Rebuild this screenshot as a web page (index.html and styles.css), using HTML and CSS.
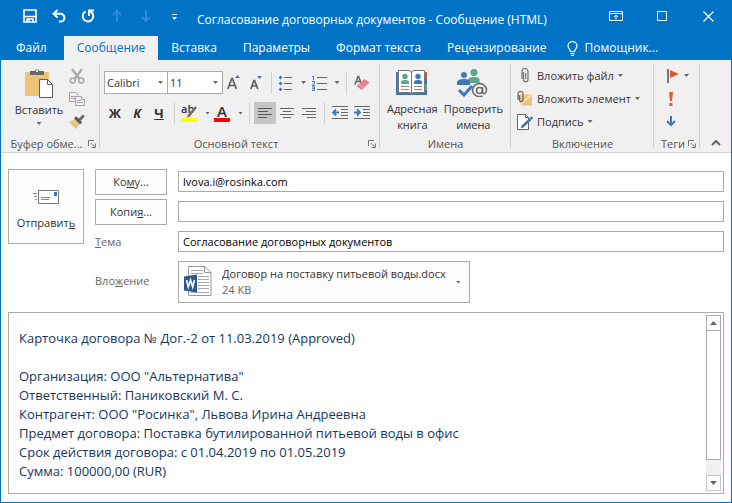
FILE: index.html
```html
<!DOCTYPE html>
<html lang="ru">
<head>
<meta charset="utf-8">
<meta name="viewport" content="width=device-width, initial-scale=1">
<title>Согласование договорных документов - Сообщение (HTML)</title>
<link rel="stylesheet" href="styles.css">
</head>
<body>
<div class="window">
  <header class="titlebar">
    <div class="quick">
      <button class="quick-btn" aria-label="Сохранить"><svg width="14" height="14" viewBox="0 0 14 14" fill="none" stroke="#fff" stroke-width="1.6"><path d="M1 1h12v12H1zM1 7.500h12M4 13V10h6v3M6 10v3"/></svg></button>
      <button class="quick-btn" aria-label="Отменить"><svg width="14" height="14" viewBox="0 0 14 14" fill="none" stroke="#fff" stroke-width="2"><path d="M5.500 1 1.500 4.800l4 3.800M2 4.800h6.500a3.900 3.900 0 0 1 0 7.800H7"/></svg></button>
      <button class="quick-btn" aria-label="Повторить"><svg width="14" height="14" viewBox="0 0 14 14" fill="none" stroke="#fff" stroke-width="2"><path d="M4.500 2.500A5.300 5.300 0 1 0 11 3.700L8 2M13 1.500H8V7"/></svg></button>
      <button class="quick-btn" aria-label="Предыдущий"><svg width="14" height="14" viewBox="0 0 14 14" fill="none" stroke="#2f8bd8" stroke-width="2"><path d="M7 13V2M3 6l4-4 4 4"/></svg></button>
      <button class="quick-btn" aria-label="Следующий"><svg width="14" height="14" viewBox="0 0 14 14" fill="none" stroke="#2f8bd8" stroke-width="2"><path d="M7 1v11M3 8l4 4 4-4"/></svg></button>
      <button class="quick-btn" aria-label="Настройка панели"><svg width="14" height="14" viewBox="0 0 14 14"><path d="M4 5h5v1H4zM4 8h5l-2.500 3z" fill="#fff"/></svg></button>
    </div>
    <h1 class="title">Согласование договорных документов - Сообщение (HTML)</h1>
    <div class="controls">
      <button class="control" aria-label="Параметры ленты"><svg width="14" height="12" viewBox="0 0 14 12" fill="none" stroke="#fff"><path d="M.5 1.500h13v9H.5zM.5 3.500h13M7 9.500V5M5 7l2-2 2 2"/></svg></button>
      <button class="control" aria-label="Развернуть"><svg width="10" height="10" viewBox="0 0 10 10" fill="none" stroke="#fff"><path d="M.5.5h9v9h-9z"/></svg></button>
      <button class="control" aria-label="Закрыть"><svg width="11" height="11" viewBox="0 0 11 11" fill="none" stroke="#fff" stroke-width="1.200"><path d="m.5.5 10 10M10.500.5l-10 10"/></svg></button>
    </div>
  </header>

  <nav class="tabs">
    <a class="tab" href="#file">Файл</a>
    <a class="tab tab-active" href="#message" aria-current="page">Сообщение</a>
    <a class="tab" href="#insert">Вставка</a>
    <a class="tab" href="#options">Параметры</a>
    <a class="tab" href="#format">Формат текста</a>
    <a class="tab" href="#review">Рецензирование</a>
    <a class="tab tab-help" href="#help"><svg width="11" height="15" viewBox="0 0 11 15" fill="none" stroke="#fff" stroke-width="1.200"><path d="M3.500 10.500C3.500 8.500 1 7.500 1 5a4.500 4.300 0 0 1 9 0c0 2.500-2.500 3.500-2.500 5.500zM3.500 12.500h4M4 14.300h3"/></svg>Помощник...</a>
  </nav>

  <section class="ribbon" aria-label="Лента">
    <div class="group">
      <div class="clipboard">
        <button class="paste">
          <svg width="28" height="30" viewBox="0 0 28 30"><path d="M0 4h24v24H0z" fill="#edc37c"/><path d="M5 3h4.500a2.700 2.700 0 0 1 5 0H19v4H5z" fill="#686868"/><path d="M11 2h2v2h-2z" fill="#f0f0f0"/><path d="M14.500 11.500h8l5 5v13h-13z" fill="#fff" stroke="#5f5f5f"/><path d="M22.500 11.500v5h5" fill="none" stroke="#5f5f5f"/></svg>
          <span>Вставить</span>
          <i class="caret"></i>
        </button>
        <div class="stack">
          <button class="tool" aria-label="Вырезать"><svg width="16" height="16" viewBox="0 0 16 16" fill="none" stroke="#a8a8a8"><path d="m3 1 7.500 10M13 1 5.500 11" stroke-width="2.200"/><circle cx="3.800" cy="12.500" r="2.500" stroke-width="1.500"/><circle cx="12.200" cy="12.500" r="2.500" stroke-width="1.500"/></svg></button>
          <button class="tool" aria-label="Копировать"><svg width="16" height="14" viewBox="0 0 16 14" fill="#f3eef3" stroke="#aaa2ab"><path d="M.5.5h6l3 3v6h-9z"/><path d="M2 4.500h4M2 6.500h4"/><path d="M6.500 4.500h6l3 3v6h-9z"/><path d="M12.500 4.500v3h3M8 8.500h4M8 10.500h6"/></svg></button>
          <button class="tool" aria-label="Формат по образцу"><svg width="16" height="15" viewBox="0 0 16 15"><path d="M0 8 5.500 5.500l5 5L7 15z" fill="#edc37c"/><path d="m5 4.500 2.200-2.200 6 6-2.200 2.200z" fill="#5a5a5a"/><path d="m9 5 5-4.500 1.800 1.700-4.500 5z" fill="#686868"/></svg></button>
        </div>
      </div>
      <footer class="caption"><span>Буфер обме...</span><button class="launcher" aria-label="Буфер обмена"><svg width="8" height="8" viewBox="0 0 8 8" fill="none" stroke="#777"><path d="M.5 6V.5H6M3 3l4 4M7.500 3.500v4h-4"/></svg></button></footer>
    </div>

    <div class="group">
      <div class="font-tools">
        <div class="row">
          <label class="pick pick-font"><select aria-label="Шрифт"><option>Calibri</option></select><i class="caret"></i></label>
          <label class="pick pick-size"><select aria-label="Размер шрифта"><option>11</option></select><i class="caret"></i></label>
          <button class="tool" aria-label="Увеличить размер"><svg width="14" height="16" viewBox="0 0 14 16"><path d="m.8 14 4-10.500h.6l4 10.500M2.200 10.500h5.800" fill="none" stroke="#5f5f5f" stroke-width="1.700"/><path d="M8 3h5l-2.500-3z" fill="#3f77b5"/></svg></button>
          <button class="tool" aria-label="Уменьшить размер"><svg width="14" height="16" viewBox="0 0 14 16"><path d="M1.800 14 5 5.500h.6L8.800 14M3 11h4.600" fill="none" stroke="#5f5f5f" stroke-width="1.700"/><path d="M8 1h5l-2.500 3z" fill="#3f77b5"/></svg></button>
          <i class="rule"></i>
          <button class="tool tool-drop" aria-label="Маркеры"><svg width="14" height="16" viewBox="0 0 14 16"><path d="M0 2h3v1H0zM0 8h3v1H0zM0 14h3v1H0zM1 1h1v3H1zM1 7h1v3H1zM1 13h1v3H1z" fill="#3f77b5" stroke="#3f77b5" stroke-width=".5"/><path d="M5 2h8v1H5zM5 8h8v1H5zM5 14h8v1H5z" fill="#666"/></svg><i class="caret"></i></button>
          <button class="tool tool-drop" aria-label="Нумерация"><svg width="15" height="16" viewBox="0 0 15 16"><path d="M0 1.500h1.500V5M0 6.500h2.500V8L.5 10.500h2.500M0 12h2.500v3.500H0M0 13.700h2.500" fill="none" stroke="#3f77b5"/><path d="M5 2h10v1H5zM5 8h10v1H5zM5 14h10v1H5z" fill="#666"/></svg><i class="caret"></i></button>
          <i class="rule"></i>
          <button class="tool" aria-label="Удалить форматирование"><svg width="16" height="16" viewBox="0 0 16 16"><path d="M1 9.500 4 1.500h.6l3 8M2 6.500h4.500" fill="none" stroke="#666" stroke-width="1.600"/><path d="m2.500 11 8-7 5 3.500-8 7.500z" fill="#ea7f91"/><path d="m5 9 4.500 4.500" stroke="#f4b8c1"/></svg></button>
        </div>
        <div class="row">
          <button class="tool glyph bold" aria-label="Полужирный">Ж</button>
          <button class="tool glyph italic" aria-label="Курсив">К</button>
          <button class="tool glyph under" aria-label="Подчёркнутый">Ч</button>
          <i class="rule"></i>
          <button class="tool tool-drop" aria-label="Цвет выделения"><span class="ink ink-yellow"><span class="ink-small">ab</span><svg class="pen" width="10" height="12" viewBox="0 0 10 12"><path d="m9 1-7 8.500" stroke="#6d6d6d" stroke-width="2.500"/><path d="M0 12 1 8l2.500 2z" fill="#6d6d6d"/></svg></span><i class="caret"></i></button>
          <button class="tool tool-drop" aria-label="Цвет текста"><span class="ink ink-red">A</span><i class="caret"></i></button>
          <i class="rule"></i>
          <button class="tool tool-on" aria-label="По левому краю" aria-pressed="true"><svg width="14" height="10" viewBox="0 0 14 10" fill="#555"><path d="M0 0h14v1H0zM0 3h10v1H0zM0 6h14v1H0zM0 9h9v1H0z"/></svg></button>
          <button class="tool" aria-label="По центру"><svg width="14" height="10" viewBox="0 0 14 10" fill="#666"><path d="M0 0h14v1H0zM3 3h8v1H3zM0 6h14v1H0zM3 9h8v1H3z"/></svg></button>
          <button class="tool" aria-label="По правому краю"><svg width="14" height="10" viewBox="0 0 14 10" fill="#666"><path d="M0 0h14v1H0zM4 3h10v1H4zM0 6h14v1H0zM5 9h9v1H5z"/></svg></button>
          <i class="rule"></i>
          <button class="tool" aria-label="Уменьшить отступ"><svg width="16" height="14" viewBox="0 0 16 14"><path d="M0 0h16v1H0zM9 3h7v1H9zM9 6h7v1H9zM9 9h7v1H9zM0 12h16v1H0z" fill="#666"/><path d="M7 6.500H1.500M4 3.500l-3 3 3 3" fill="none" stroke="#3f77b5" stroke-width="1.800"/></svg></button>
          <button class="tool" aria-label="Увеличить отступ"><svg width="16" height="14" viewBox="0 0 16 14"><path d="M0 0h16v1H0zM9 3h7v1H9zM9 6h7v1H9zM9 9h7v1H9zM0 12h16v1H0z" fill="#666"/><path d="M0 6.500h5.500M3 3.500l3 3-3 3" fill="none" stroke="#3f77b5" stroke-width="1.800"/></svg></button>
        </div>
      </div>
      <footer class="caption"><span>Основной текст</span><button class="launcher" aria-label="Основной текст"><svg width="8" height="8" viewBox="0 0 8 8" fill="none" stroke="#777"><path d="M.5 6V.5H6M3 3l4 4M7.500 3.500v4h-4"/></svg></button></footer>
    </div>

    <div class="group">
      <div class="names">
        <button class="large">
          <svg width="32" height="28" viewBox="0 0 32 28"><path d="M0 3h31v23H0z" fill="#3f77b5"/><path d="M28 3h3v6h-3z" fill="#dd5a35"/><path d="M28 9h3v6h-3z" fill="#3f77b5"/><path d="M28 15h3v6h-3z" fill="#5fa48b"/><path d="M2.500 1.500H13q2.500.5 2.500 2.500 0-2 2.500-2.500h10.500v22H18q-2 0-2.500 1.500-.5-1.500-2.500-1.500H2.500z" fill="#fff" stroke="#777"/><path d="M15.500 3v21" stroke="#777"/><circle cx="9" cy="7.500" r="2.700" fill="#5fa48b"/><path d="M5 15v-2q0-2 4-2t4 2v2z" fill="#5fa48b"/><circle cx="22" cy="7.500" r="2.700" fill="#3f77b5"/><path d="M18 15v-2q0-2 4-2t4 2v2z" fill="#3f77b5"/><path d="M5 17.500h8M5 20.500h8M18 17.500h8M18 20.500h8" stroke="#888"/></svg>
          <span>Адресная<br>книга</span>
        </button>
        <button class="large">
          <svg width="32" height="28" viewBox="0 0 32 28"><circle cx="17" cy="3.500" r="3.500" fill="#5fa48b"/><path d="M11 14v-3q0-3 6-3t5.500 3v3z" fill="#5fa48b"/><circle cx="7" cy="6" r="3.500" fill="#3f77b5" stroke="#f0f0f0"/><path d="M0 16v-2.500q0-3.500 7-3.500t6 3.500V16z" fill="#3f77b5"/><path d="m2 21 5 5 8-9" fill="none" stroke="#3f77b5" stroke-width="3"/><g fill="none" stroke="#666" stroke-width="1.500"><circle cx="22.500" cy="21.500" r="3"/><path d="M25.500 18v5q.5 2 2.500 1.500 1.500-1 1.500-4a7 6.500 0 1 0-4 6.500"/></g></svg>
          <span>Проверить<br>имена</span>
        </button>
      </div>
      <footer class="caption"><span>Имена</span></footer>
    </div>

    <div class="group">
      <div class="include">
        <button class="line"><svg width="16" height="16" viewBox="0 0 16 16" fill="none" stroke="#707070" stroke-width="1.200"><path d="M5.500 4v7.500a2 2 0 0 0 4.500 0V3.500a3 3 0 0 0-6 0V11M7.700 5v6" transform="translate(1)"/></svg><span>Вложить файл</span><i class="caret"></i></button>
        <button class="line"><svg width="16" height="16" viewBox="0 0 16 16"><path d="M3 3.500h12v11H3z" fill="#edc37c"/><path d="m3 14 11-10" stroke="#f8ead0" stroke-width="1.500"/><path d="M2.500 4v5a1.600 1.600 0 0 0 3.500 0V3a2.300 2.300 0 0 0-5 0v6" fill="none" stroke="#666" stroke-width="1.200"/></svg><span>Вложить элемент</span><i class="caret"></i></button>
        <button class="line"><svg width="16" height="16" viewBox="0 0 16 16"><path d="M.5.5h8l3 3v12H.5z" fill="#fff" stroke="#666"/><path d="M8.500.5v3h3" fill="none" stroke="#666"/><path d="m5 13 8.500-8" stroke="#3f77b5" stroke-width="2.800"/><path d="m13.500 3 2 2" stroke="#3f77b5" stroke-width="2"/><path d="m3.500 14.500 1-2.500 1.500 1.500z" fill="#3f77b5"/></svg><span>Подпись</span><i class="caret"></i></button>
      </div>
      <footer class="caption"><span>Включение</span></footer>
    </div>

    <div class="group">
      <div class="marks">
        <button class="tool tool-drop" aria-label="К исполнению"><svg width="14" height="14" viewBox="0 0 14 14"><path d="M1 0h2v14H1z" fill="#777"/><path d="m4 1 9 4-9 4z" fill="#dd5a35"/></svg><i class="caret"></i></button>
        <button class="tool" aria-label="Высокая важность"><svg width="4" height="14" viewBox="0 0 4 14" fill="#dd5a35"><path d="M0 0h4L3 9H1zM.5 11h3v3h-3z"/></svg></button>
        <button class="tool" aria-label="Низкая важность"><svg width="10" height="11" viewBox="0 0 10 11" fill="none" stroke="#3f77b5" stroke-width="2"><path d="M5 0v9M1 5l4 4 4-4"/></svg></button>
      </div>
      <footer class="caption"><span>Теги</span><button class="launcher" aria-label="Теги"><svg width="8" height="8" viewBox="0 0 8 8" fill="none" stroke="#777"><path d="M.5 6V.5H6M3 3l4 4M7.500 3.500v4h-4"/></svg></button></footer>
    </div>

    <button class="collapse" aria-label="Свернуть ленту"><svg width="10" height="6" viewBox="0 0 10 6" fill="none" stroke="#666" stroke-width="2"><path d="m1 5 4-4 4 4"/></svg></button>
  </section>

  <main class="compose">
    <form class="fields">
      <button type="button" class="box send">
        <svg width="28" height="15" viewBox="0 0 28 15"><path d="M6.500.5h20v13h-20z" fill="#fff" stroke="#777"/><path d="M22 2h3v4h-3z" fill="#3f77b5"/><path d="M9 7.500h9M9 9.500h8M1 3.500h4M2 6.500h3M3 9.500h2" stroke="#888"/></svg>
        <span>Отправит<u>ь</u></span>
      </button>
      <button type="button" class="box to">Ко<u>м</u>у...</button>
      <input class="box input" type="text" aria-label="Кому" value="lvova.i@rosinka.com">
      <button type="button" class="box to">Копи<u>я</u>...</button>
      <input class="box input" type="text" aria-label="Копия" value="">
      <label class="label" for="subject"><u>Т</u>ема</label>
      <input class="box input" id="subject" type="text" value="Согласование договорных документов">
      <span class="label label-attach">Вло<u>ж</u>ение</span>
      <button type="button" class="box attachment">
        <svg width="28" height="32" viewBox="0 0 28 32"><path d="M4.500.5H21l6 6v23H4.500z" fill="#fff" stroke="#999"/><path d="M20.500.5v6H27" fill="none" stroke="#999"/><path d="M7 4.500h12M7 7.500h12M14 10.500h11M14 13.500h11M14 16.500h11M14 19.500h11M14 22.500h11M7 26.500h18" stroke="#aaa"/><path d="M0 10.500 13 8.500v18L0 24.500z" fill="#2b5797"/><path d="m2.500 14 1.800 7 2.200-7 2.200 7 1.800-7" fill="none" stroke="#fff" stroke-width="1.700"/></svg>
        <span class="file"><span>Договор на поставку питьевой воды.docx</span><span class="size">24 KB</span></span>
        <i class="caret"></i>
      </button>
    </form>

    <section class="message">
      <article class="text">
        <p>Карточка договора № Дог.-2 от 11.03.2019 (Approved)</p>
        <p>Организация: ООО "Альтернатива"<br>Ответственный: Паниковский М. С.<br>Контрагент: ООО "Росинка", Львова Ирина Андреевна<br>Предмет договора: Поставка бутилированной питьевой воды в офис<br>Срок действия договора: с 01.04.2019 по 01.05.2019<br>Сумма: 100000,00 (RUR)</p>
      </article>
      <div class="scroll">
        <button class="scroll-btn" aria-label="Вверх"><svg width="7" height="4" viewBox="0 0 7 4"><path d="M0 4h7L3.500 0z" fill="#666"/></svg></button>
        <div class="thumb"></div>
        <button class="scroll-btn scroll-end" aria-label="Вниз"><svg width="7" height="4" viewBox="0 0 7 4"><path d="M0 0h7L3.500 4z" fill="#666"/></svg></button>
      </div>
    </section>
  </main>
</div>
</body>
</html>
```
FILE: styles.css
```css
* { box-sizing: border-box; }

body {
  margin: 0;
  font: 11px/16px "Open Sans", "Noto Sans", sans-serif;
  color: #333;
}

button, input, select {
  margin: 0;
  padding: 0;
  border: 0;
  border-radius: 0;
  background: none;
  font: inherit;
  color: inherit;
}

svg { display: block; flex: none; }

.window {
  display: flex;
  flex-direction: column;
  min-height: 100vh;
  border: solid #0173c7;
  border-width: 0 1px 1px;
  background: #fff;
}

.titlebar {
  display: flex;
  align-items: center;
  height: 36px;
  padding: 0 0 4px 14px;
  background: #0173c7;
  color: #fff;
}

.quick { display: flex; }

.quick-btn {
  display: grid;
  place-items: center;
  width: 29px;
  height: 28px;
}

.title {
  flex: 1;
  margin: 0;
  padding: 8px 0 0 8px;
  font-size: 12px;
  font-weight: 400;
  white-space: nowrap;
}

.controls { display: flex; }

.control {
  display: grid;
  place-items: center;
  width: 46px;
  height: 28px;
}

.tabs {
  display: flex;
  height: 24px;
  background: #0173c7;
}

.tab {
  display: flex;
  align-items: center;
  padding: 0 13px;
  color: #fff;
  font-size: 12px;
  text-decoration: none;
  white-space: nowrap;
}

.tab:first-child { padding: 0 17px 0 15px; }

.tab-active {
  background: #f0f0f0;
  color: #0173c7;
}

.tab-help {
  gap: 6px;
  padding-left: 8px;
}

.ribbon {
  display: grid;
  grid-template-columns: 99px 280px 131px 143px 46px 1fr;
  height: 93px;
  padding: 4px 0;
  border-bottom: 1px solid #d2d2d2;
  background: #f0f0f0;
}

.group {
  display: flex;
  flex-direction: column;
  border-right: 1px solid #d0d0d0;
}

.group > :first-child { flex: 1; }

.caption {
  display: flex;
  align-items: center;
  height: 9px;
  padding: 0 3px 0 4px;
  color: #555;
  line-height: 9px;
  white-space: nowrap;
}

.caption span { flex: 1; text-align: center; }

.caret {
  flex: none;
  width: 5px;
  height: 3px;
  background: #666;
  clip-path: polygon(0 0, 100% 0, 50% 100%);
}

.clipboard {
  display: flex;
  gap: 4px;
  padding-left: 12px;
}

.paste {
  display: flex;
  flex-direction: column;
  align-items: center;
  width: 52px;
  padding-top: 4px;
  gap: 4px;
}

.stack {
  display: flex;
  flex-direction: column;
}

.stack .tool { width: 16px; height: 23px; }

.tool {
  display: flex;
  align-items: center;
  justify-content: center;
  width: 22px;
  height: 22px;
}

.tool-drop {
  width: 33px;
  gap: 8px;
}

.tool-on { background: #c5c5c5; }

.font-tools {
  display: flex;
  flex-direction: column;
  gap: 8px;
  padding: 7px 0 0 4px;
}

.row {
  display: flex;
  align-items: center;
}

.rule {
  width: 1px;
  height: 22px;
  margin: 0 4px;
  background: #d0d0d0;
}

.pick {
  position: relative;
  height: 23px;
  border: 1px solid #ababab;
  background: #fff;
}

.pick-font { width: 64px; }
.pick-size { width: 56px; margin-left: -1px; }

.pick select {
  display: block;
  width: 100%;
  height: 100%;
  padding-left: 2px;
  appearance: none;
}

.pick .caret {
  position: absolute;
  top: 9px;
  right: 4px;
}

.glyph { font-size: 13px; font-weight: 700; }
.italic { font-style: italic; }
.under { text-decoration: underline; }

.ink {
  position: relative;
  width: 16px;
  height: 18px;
  border-bottom: 4px solid;
  font-size: 15px;
  font-weight: 600;
  line-height: 14px;
}

.ink-yellow { border-color: #ff0; }
.ink-red { border-color: #f00; }
.ink-small { display: block; font-size: 11px; line-height: 10px; text-align: left; }

.pen {
  position: absolute;
  right: 0;
  bottom: 0;
}

.names {
  display: flex;
  justify-content: center;
  gap: 6px;
}

.large {
  display: flex;
  flex-direction: column;
  align-items: center;
  gap: 4px;
  padding-top: 5px;
}

.include { padding: 0 0 0 6px; }

.line {
  display: flex;
  align-items: center;
  gap: 4px;
  height: 23px;
  white-space: nowrap;
}

.marks {
  display: flex;
  flex-direction: column;
  padding-left: 6px;
}

.marks .tool { height: 23px; }
.marks .tool-drop { width: 35px; gap: 4px; }

.collapse {
  align-self: end;
  justify-self: center;
  padding: 5px 5px 2px;
}

.compose {
  display: flex;
  flex: 1;
  flex-direction: column;
  gap: 9px;
  padding: 16px 7px 8px;
}

.box {
  border: 1px solid #ababab;
  background: #fdfdfd;
}

.fields {
  display: grid;
  grid-template-columns: 76px 72px 1fr;
  grid-template-rows: 26px 26px 26px auto;
  align-items: center;
  gap: 4px 11px;
}

.send {
  grid-row: 1 / 4;
  align-self: start;
  display: flex;
  flex-direction: column;
  align-items: center;
  justify-content: center;
  gap: 10px;
  height: 75px;
  padding-top: 8px;
}

.to { height: 26px; }

.input {
  align-self: start;
  width: 100%;
  height: 21px;
  margin-top: 2px;
  padding: 0 4px;
  background: #fff;
  color: #000;
}

.label { color: #666; }

.label-attach { grid-column: 2; }

.attachment {
  display: flex;
  align-items: center;
  justify-self: start;
  gap: 10px;
  height: 42px;
  margin-top: 2px;
  padding: 0 8px 0 5px;
  text-align: left;
}

.file {
  display: flex;
  flex-direction: column;
}

.size { color: #666; }

.message {
  display: flex;
  flex: 1;
  padding: 2px;
  border: 1px solid #ababab;
}

.text {
  flex: 1;
  padding: 14px 8px 0;
  color: #17365d;
  font-size: 13px;
  line-height: 19px;
}

.text p { margin: 0 0 19px; }
.text p:last-child { margin: 0; }

.scroll {
  display: flex;
  flex-direction: column;
  width: 15px;
  background: #f0f0f0;
}

.scroll-btn {
  display: grid;
  place-items: center;
  height: 16px;
  border: 1px solid #ababab;
  background: #fff;
}

.thumb {
  flex: 1;
  margin: -1px 0 15px;
  border: 1px solid #ababab;
  background: #fff;
}

.scroll-end { border-color: #c8c8c8; }
```
